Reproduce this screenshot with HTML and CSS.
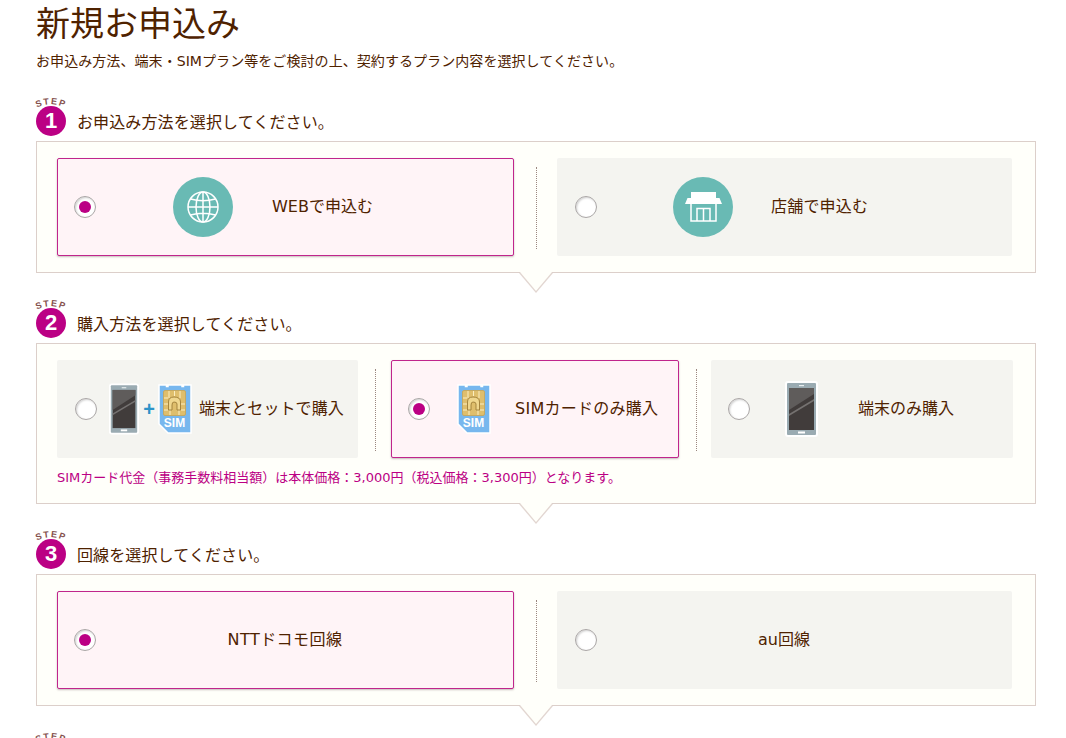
FILE: index.html
```html
<!DOCTYPE html>
<html lang="ja">
<head>
<meta charset="utf-8">
<title>新規お申込み</title>
<link rel="stylesheet" href="styles.css">
</head>
<body>
<svg class="defs" width="0" height="0" aria-hidden="true">
  <defs>
    <path id="step-arc" d="M-1 11.500 Q15 3 31 11.500"/>
    <symbol id="phone" viewBox="0 0 33 56">
      <rect x="0" y="0" width="33" height="56" rx="3" fill="#fff"/>
      <rect x="2" y="2" width="29" height="52" rx="1" fill="#9aabb2"/>
      <rect x="4" y="7" width="25" height="42" fill="#413c3b"/>
      <polygon points="4,7 29,7 29,13 4,29" fill="#5f5c5b"/>
      <polygon points="4,33 29,18 29,20 4,35" fill="#757271"/>
      <rect x="14" y="4" width="5" height="1.200" fill="#e8eef0"/>
      <rect x="13" y="50.500" width="7" height="2" fill="#fff"/>
    </symbol>
    <symbol id="sim" viewBox="0 0 34 50">
      <path d="M1 1H8.500V2.500H10V1H24V2.500H25.500V1H33V49H10L1 40Z" fill="#77b7ee" stroke="#fff" stroke-width="1.500"/>
      <rect x="5.500" y="6.500" width="22" height="25" rx="1.500" fill="#dfbe6c" stroke="#c9a552" stroke-width=".8"/>
      <path d="M11 7V14M16.500 7V12M22 7V14M6 14H10M6 20H10M6 26H10M23 20H27M23 26H27M12 31V26M21 31V26" stroke="#fbeec2" stroke-width="1" fill="none"/>
      <path d="M10.500 26V18Q10.500 13 16 13Q22.500 13 22.500 18V26H19V20Q19 18 16 18Q14 18 14 21V26Z" fill="#f0d78e" stroke="#9d7d38" stroke-width=".9"/>
      <text class="sim-text" x="16.500" y="42.500">SIM</text>
    </symbol>
  </defs>
</svg>

<main class="page">
  <h1 class="title">新規お申込み</h1>
  <p class="lead">お申込み方法、端末・SIMプラン等をご検討の上、契約するプラン内容を選択してください。</p>

  <div class="step-head">
    <svg class="badge" viewBox="0 0 30 39" width="30" height="39">
      <text class="step-word"><textPath href="#step-arc" startOffset="50%">STEP</textPath></text>
      <circle cx="15" cy="24" r="15" fill="#bb0084"/>
      <text class="step-num" x="15" y="31">1</text>
    </svg>
    <h2 class="step-title">お申込み方法を選択してください。</h2>
  </div>
  <section class="box">
    <div class="row row-two">
      <div class="card on">
        <span class="radio"></span>
        <span class="disc disc-a">
          <svg viewBox="0 0 32 32" width="32" height="32" fill="none" stroke="#fff" stroke-width="1.500">
            <circle cx="16" cy="16" r="15"/>
            <ellipse cx="16" cy="16" rx="7" ry="15"/>
            <path d="M16 1V31M1 16H31M3.500 8Q16 11.500 28.500 8M3.500 24Q16 20.500 28.500 24"/>
          </svg>
        </span>
        <span class="label label-web">WEBで申込む</span>
      </div>
      <div class="rule"></div>
      <div class="card off">
        <span class="radio"></span>
        <span class="disc disc-b">
          <svg viewBox="0 0 37 30" width="37" height="30">
            <path d="M6 0H31V6H34.500L37 12H0L2.500 6H6Z" fill="#fff"/>
            <path d="M6 12V29H31V12" fill="none" stroke="#fff" stroke-width="1.500"/>
            <path d="M12 29V16.500H25V29M18.500 16.500V29" fill="none" stroke="#fff" stroke-width="1.500"/>
          </svg>
        </span>
        <span class="label label-shop">店舗で申込む</span>
      </div>
    </div>
    <i class="tail"></i>
  </section>

  <div class="step-head">
    <svg class="badge" viewBox="0 0 30 39" width="30" height="39">
      <text class="step-word"><textPath href="#step-arc" startOffset="50%">STEP</textPath></text>
      <circle cx="15" cy="24" r="15" fill="#bb0084"/>
      <text class="step-num" x="15" y="31">2</text>
    </svg>
    <h2 class="step-title">購入方法を選択してください。</h2>
  </div>
  <section class="box">
    <div class="row row-three">
      <div class="card off">
        <span class="radio"></span>
        <svg class="pic pic-setphone" width="30" height="54"><use href="#phone"/></svg>
        <span class="plus">+</span>
        <svg class="pic pic-setsim" width="34" height="50"><use href="#sim"/></svg>
        <span class="label label-set">端末とセットで購入</span>
      </div>
      <div class="rule"></div>
      <div class="card on">
        <span class="radio"></span>
        <svg class="pic pic-sim" width="34" height="50"><use href="#sim"/></svg>
        <span class="label label-simonly">SIMカードのみ購入</span>
      </div>
      <div class="rule"></div>
      <div class="card off-flush">
        <span class="radio"></span>
        <svg class="pic pic-phone" width="33" height="56"><use href="#phone"/></svg>
        <span class="label label-phone">端末のみ購入</span>
      </div>
    </div>
    <p class="note">SIMカード代金（事務手数料相当額）は本体価格：3,000円（税込価格：3,300円）となります。</p>
    <i class="tail"></i>
  </section>

  <div class="step-head">
    <svg class="badge" viewBox="0 0 30 39" width="30" height="39">
      <text class="step-word"><textPath href="#step-arc" startOffset="50%">STEP</textPath></text>
      <circle cx="15" cy="24" r="15" fill="#bb0084"/>
      <text class="step-num" x="15" y="31">3</text>
    </svg>
    <h2 class="step-title">回線を選択してください。</h2>
  </div>
  <section class="box">
    <div class="row row-two">
      <div class="card on">
        <span class="radio"></span>
        <span class="label label-center label-wide">NTTドコモ回線</span>
      </div>
      <div class="rule"></div>
      <div class="card off">
        <span class="radio"></span>
        <span class="label label-center label-au">au回線</span>
      </div>
    </div>
    <i class="tail"></i>
  </section>

  <div class="step-head">
    <svg class="badge" viewBox="0 0 30 39" width="30" height="39">
      <text class="step-word"><textPath href="#step-arc" startOffset="50%">STEP</textPath></text>
    </svg>
  </div>
</main>
</body>
</html>
```
FILE: styles.css
```css
* { box-sizing: border-box; }
html, body { margin: 0; padding: 0; background: #fff; }
body {
  height: 738px;
  overflow: hidden;
  font-family: "DejaVu Sans", "Noto Sans CJK JP", sans-serif;
  color: #4f2200;
}
.defs { position: absolute; }
.page { width: 1000px; margin-left: 36px; }

.title {
  margin: 0;
  font-size: 34px;
  font-weight: 400;
  line-height: 44px;
  font-family: "Noto Sans CJK JP", sans-serif;
}
.lead {
  margin: 7px 0 26px;
  font-size: 14px;
  line-height: 20px;
  letter-spacing: .07px;
  white-space: nowrap;
}

.step-head {
  display: flex;
  align-items: flex-start;
  gap: 11px;
  height: 44px;
}
.badge { flex: none; overflow: visible; }
.step-word {
  font-family: "Liberation Sans", sans-serif;
  font-size: 9px;
  font-weight: 700;
  letter-spacing: 1.500px;
  fill: #84504c;
  text-anchor: middle;
}
.step-num {
  font-family: "Liberation Sans", sans-serif;
  font-size: 22px;
  font-weight: 700;
  fill: #fff;
  text-anchor: middle;
}
.step-title {
  margin: 14px 0 0;
  font-size: 16px;
  font-weight: 400;
  line-height: 24px;
  letter-spacing: .12px;
}

.box {
  position: relative;
  margin-bottom: 26px;
  padding: 16px 22px 16px 20px;
  background: #fffffa;
  border: 1px solid #dccfca;
}
.tail {
  position: absolute;
  left: 482px;
  bottom: -21px;
  width: 0;
  height: 0;
  border-top: 20px solid #e2d6d1;
  border-left: 17px solid transparent;
  border-right: 17px solid transparent;
}
.tail::after {
  content: "";
  position: absolute;
  left: -16px;
  top: -21px;
  width: 0;
  height: 0;
  border-top: 19px solid #fffffa;
  border-left: 16px solid transparent;
  border-right: 16px solid transparent;
}

.row { display: grid; height: 98px; }
.row-two { grid-template-columns: 457px 43px 455px; }
.row-three { grid-template-columns: 301px 33px 288px 32px 302px; }

.rule {
  justify-self: start;
  width: 1px;
  height: 82px;
  margin-top: 9px;
  border-left: 1px dotted #9b8780;
}
.row-two .rule { margin-left: 22px; }
.row-three .rule { margin-left: 17px; }

.card {
  display: flex;
  align-items: center;
  border-radius: 2px;
  white-space: nowrap;
}
.on {
  padding-left: 16px;
  background: #fff4f7;
  border: 1px solid #c0258c;
  box-shadow: 0 1px 2px rgba(90, 60, 70, .35);
}
.off { padding-left: 18px; background: #f4f4f0; }
.off-flush { padding-left: 17px; background: #f4f4f0; }

.radio {
  flex: none;
  display: flex;
  align-items: center;
  justify-content: center;
  width: 22px;
  height: 22px;
  border: 1px solid #aaa6a6;
  border-radius: 50%;
  background: #fff;
  box-shadow: inset 1px 1px 2px rgba(0, 0, 0, .18);
}
.on .radio::after {
  content: "";
  width: 12px;
  height: 12px;
  border-radius: 50%;
  background: #bb0084;
}

.disc {
  flex: none;
  display: flex;
  align-items: center;
  justify-content: center;
  width: 60px;
  height: 60px;
  border-radius: 50%;
  background: #69bab4;
}
.disc-a { margin-left: 77px; }
.disc-b { margin-left: 76px; }

.label { font-size: 16px; line-height: 24px; }
.label-web { margin-left: 39px; }
.label-shop { margin-left: 38px; letter-spacing: .2px; }
.label-center { flex: 1; text-align: center; padding-right: 39px; }
.label-wide { letter-spacing: .45px; }
.label-au { padding-right: 41px; }

.pic { flex: none; display: block; }
.pic-setphone { margin-left: 12px; }
.plus {
  flex: none;
  width: 20px;
  text-align: center;
  font-family: "Liberation Sans", sans-serif;
  font-size: 20px;
  font-weight: 700;
  line-height: 20px;
  color: #2c93c8;
}
.pic-setsim { margin-left: -1px; margin-right: 7px; }
.label-set { letter-spacing: .1px; }
.pic-sim { margin-left: 27px; }
.label-simonly { margin-left: 24px; letter-spacing: .25px; }
.pic-phone { margin-left: 35px; }
.label-phone { margin-left: 40px; }

.sim-text {
  font-family: "Liberation Sans", sans-serif;
  font-size: 12px;
  font-weight: 700;
  fill: #fff;
  text-anchor: middle;
}

.note {
  margin: 11px 0 0;
  font-size: 13px;
  line-height: 18px;
  color: #bb0084;
}
```
